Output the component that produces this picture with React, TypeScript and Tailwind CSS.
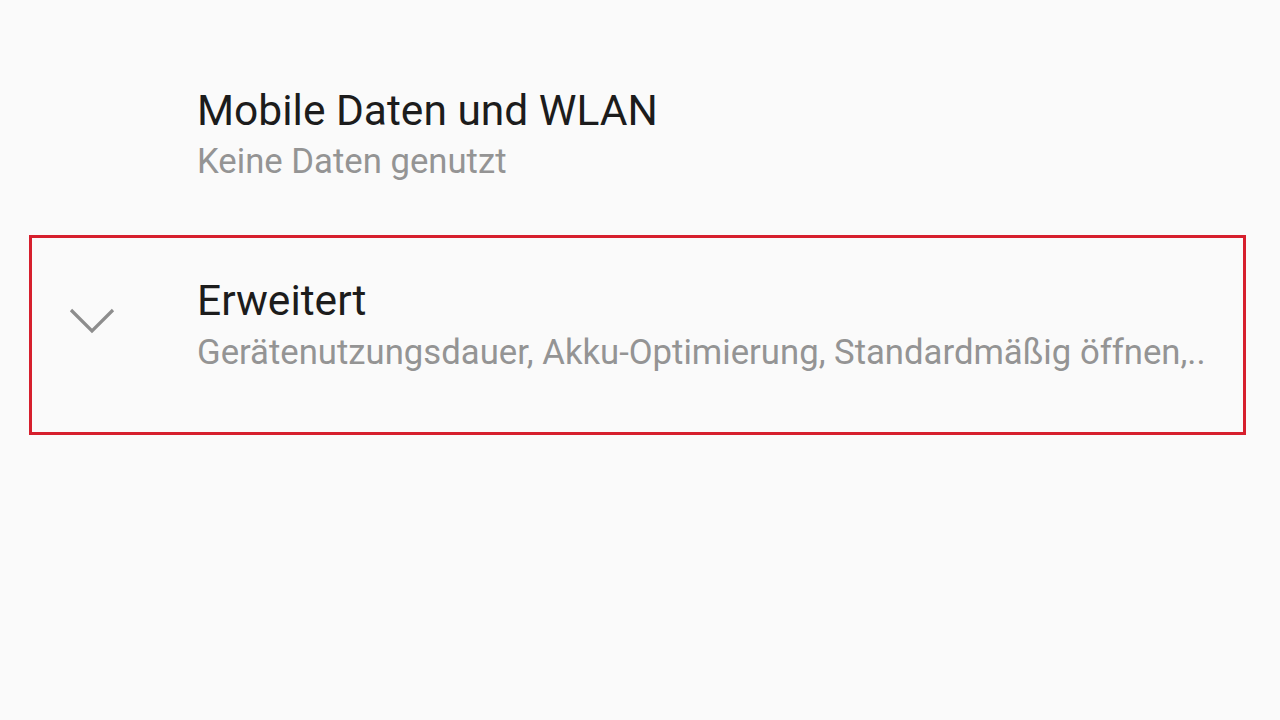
export default function App() {
  return (
    <div className="w-[1280px] h-[720px] bg-[#fafafa] overflow-hidden" style={{ fontFamily: 'Roboto, "Noto Sans", sans-serif' }}>
      {/* Mobile Daten */}
      <div className="pt-[87px] pl-[197px]">
        <div className="text-[42.5px] leading-[48px] text-[#1c1c1c]">Mobile Daten und WLAN</div>
        <div className="mt-[2px] text-[34.7px] leading-[48px] text-[#949494]">Keine Daten genutzt</div>
      </div>

      {/* Erweitert, highlighted */}
      <div className="mt-[50px] ml-[29px] w-[1217px] border-[3px] border-[#d61f2d] flex">
        <div className="w-[165px] shrink-0 pt-[69px] pl-[37px]">
          <svg width="46" height="28" viewBox="0 0 46 28" fill="none">
            <path d="M2 3 L23 24 L44 3" stroke="#8d8d8d" strokeWidth="3.2" />
          </svg>
        </div>
        <div className="pt-[39px] pb-[56px]">
          <div className="text-[42.5px] leading-[48px] text-[#1c1c1c]">Erweitert</div>
          <div className="mt-[3px] text-[34.7px] leading-[48px] text-[#949494] whitespace-nowrap">
            Gerätenutzungsdauer, Akku-Optimierung, Standardmäßig öffnen,..
          </div>
        </div>
      </div>
    </div>
  );
}
